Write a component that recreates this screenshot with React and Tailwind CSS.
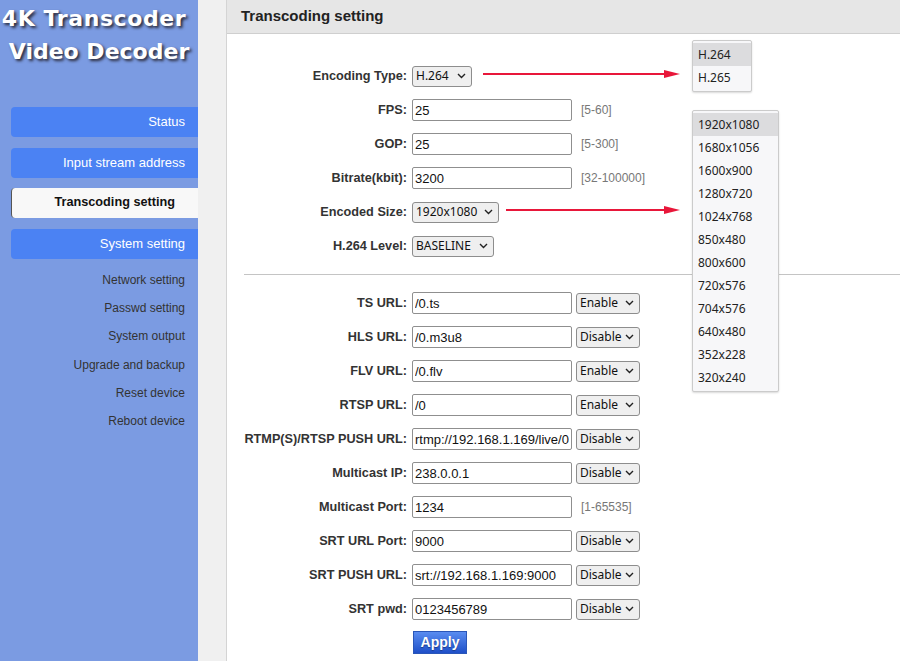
import React from "react";

const Chevron = () => (
  <svg width="9" height="6" viewBox="0 0 9 6" className="shrink-0">
    <path d="M1 1 L4.5 4.5 L8 1" fill="none" stroke="#222" strokeWidth="1.4" />
  </svg>
);

function Sel({ value, w }) {
  return (
    <div
      className={`h-[21px] ${w} border border-[#8d8d8d] rounded-[3px] bg-[#efefef] flex items-center justify-between pl-[3px] pr-[5px] text-[12px] text-[#111] font-['Noto_Sans',sans-serif] shrink-0`}
    >
      <span className="leading-none">{value}</span>
      <Chevron />
    </div>
  );
}

function Inp({ value }) {
  return (
    <input
      readOnly
      value={value}
      className="h-[22px] w-[160px] border border-[#8f8f8f] rounded-[2px] px-[2px] text-[13px] text-[#111] bg-white outline-none shrink-0 font-['Liberation_Sans',Arial,sans-serif]"
    />
  );
}

function Row({ label, children }) {
  return (
    <div className="flex items-center h-[34px]">
      <div className="w-[181px] shrink-0 text-right pr-[1px] pt-[1px] text-[12.7px] font-bold text-[#333]">{label}</div>
      <div className="ml-[4px] flex items-center">{children}</div>
    </div>
  );
}

const Hint = ({ t }) => <span className="ml-[9px] text-[12px] text-[#777]">{t}</span>;
const SSel = ({ v }) => (
  <div className="ml-[4px]">
    <Sel value={v} w="w-[64px]" />
  </div>
);

function Arrow({ className, width }) {
  return (
    <svg width={width} height="10" viewBox={`0 0 ${width} 10`} className={className}>
      <line x1="0" y1="5" x2={width - 14} y2="5" stroke="#e8173a" strokeWidth="2" />
      <polygon points={`${width - 16},1 ${width},5 ${width - 16},9`} fill="#e8173a" />
    </svg>
  );
}

const sizes = [
  "1920x1080",
  "1680x1056",
  "1600x900",
  "1280x720",
  "1024x768",
  "850x480",
  "800x600",
  "720x576",
  "704x576",
  "640x480",
  "352x228",
  "320x240",
];

export default function App() {
  const sub = ["Network setting", "Passwd setting", "System output", "Upgrade and backup", "Reset device", "Reboot device"];
  return (
    <div className="flex h-[661px] overflow-hidden font-['Liberation_Sans',Arial,sans-serif]">
      {/* Sidebar */}
      <div className="w-[198px] shrink-0 bg-[#7b9be2] flex flex-col">
        <div className="pt-[2px] text-center font-['DejaVu_Sans',Verdana,sans-serif] font-bold text-white text-[22px] leading-[33px] [text-shadow:2px_2px_3px_#2a2a3a] whitespace-nowrap">
          <div className="tracking-[0.6px] pr-[10px]">4K Transcoder</div>
          <div>Video Decoder</div>
        </div>
        <div className="mt-[39px] flex flex-col gap-[10.5px] pl-[11px]">
          <div className="h-[30px] bg-[#4b82f3] rounded-l-[4px] flex items-center justify-end pr-[13px] text-[13px] text-white">Status</div>
          <div className="h-[30px] bg-[#4b82f3] rounded-l-[4px] flex items-center justify-end pr-[13px] text-[13px] text-white">Input stream address</div>
          <div className="h-[30px] bg-[#f8f8f8] rounded-l-[4px] border-l border-[#555] flex items-center justify-end pr-[23px] text-[12.7px] font-bold text-[#111]">Transcoding setting</div>
          <div className="h-[30px] bg-[#4b82f3] rounded-l-[4px] flex items-center justify-end pr-[13px] text-[13px] text-white">System setting</div>
        </div>
        <div className="mt-[7.5px] flex flex-col">
          {sub.map((s) => (
            <div key={s} className="h-[28.2px] flex items-center justify-end pr-[13px] text-[12px] text-[#333]">
              {s}
            </div>
          ))}
        </div>
      </div>
      {/* Gap strip */}
      <div className="w-[29px] shrink-0 bg-[#f0f0f0] border-r border-[#d4d4d4]" />
      {/* Content */}
      <div className="flex-1 bg-white relative">
        <div className="h-[34px] bg-[#e6e6e6] border-b border-[#cfcfcf] pl-[14px] flex items-center text-[15px] font-bold text-[#222]">
          Transcoding setting
        </div>
        <div className="pt-[25px]">
          <Row label="Encoding Type:">
            <Sel value="H.264" w="w-[60px]" />
          </Row>
          <Row label="FPS:">
            <Inp value="25" />
            <Hint t="[5-60]" />
          </Row>
          <Row label="GOP:">
            <Inp value="25" />
            <Hint t="[5-300]" />
          </Row>
          <Row label="Bitrate(kbit):">
            <Inp value="3200" />
            <Hint t="[32-100000]" />
          </Row>
          <Row label="Encoded Size:">
            <Sel value="1920x1080" w="w-[87px]" />
          </Row>
          <Row label="H.264 Level:">
            <Sel value="BASELINE" w="w-[82px]" />
          </Row>
          <div className="mt-[11px] mb-[11px] ml-[17px] border-t border-[#c4c4c4]" />
          <Row label="TS URL:">
            <Inp value="/0.ts" />
            <SSel v="Enable" />
          </Row>
          <Row label="HLS URL:">
            <Inp value="/0.m3u8" />
            <SSel v="Disable" />
          </Row>
          <Row label="FLV URL:">
            <Inp value="/0.flv" />
            <SSel v="Enable" />
          </Row>
          <Row label="RTSP URL:">
            <Inp value="/0" />
            <SSel v="Enable" />
          </Row>
          <Row label="RTMP(S)/RTSP PUSH URL:">
            <Inp value="rtmp://192.168.1.169/live/0" />
            <SSel v="Disable" />
          </Row>
          <Row label="Multicast IP:">
            <Inp value="238.0.0.1" />
            <SSel v="Disable" />
          </Row>
          <Row label="Multicast Port:">
            <Inp value="1234" />
            <Hint t="[1-65535]" />
          </Row>
          <Row label="SRT URL Port:">
            <Inp value="9000" />
            <SSel v="Disable" />
          </Row>
          <Row label="SRT PUSH URL:">
            <Inp value="srt://192.168.1.169:9000" />
            <SSel v="Disable" />
          </Row>
          <Row label="SRT pwd:">
            <Inp value="0123456789" />
            <SSel v="Disable" />
          </Row>
          <div className="ml-[186px] mt-[5px] w-[54px] h-[23px] bg-gradient-to-b from-[#5a8cf0] to-[#1f4fc8] border border-[#2a56b8] flex items-center justify-center text-[14px] font-bold text-white [text-shadow:0_1px_1px_#1a3a8a]">
            Apply
          </div>
        </div>

        {/* Overlays: arrows */}
        <Arrow className="absolute left-[256px] top-[69px]" width={197} />
        <Arrow className="absolute left-[279px] top-[205px]" width={174} />

        {/* Dropdown lists */}
        <div className="absolute left-[465px] top-[40px] w-[60px] bg-[#f7f7f9] border border-[#cbcbcb] rounded-[2px] py-[2px] shadow-[0_1px_2px_rgba(0,0,0,0.15)] font-['Noto_Sans',sans-serif] text-[12px] text-[#222]">
          <div className="h-[23px] bg-[#dcdcde] flex items-center pl-[5px]">H.264</div>
          <div className="h-[23px] flex items-center pl-[5px]">H.265</div>
        </div>
        <div className="absolute left-[465px] top-[110px] w-[87px] bg-[#f7f7f9] border border-[#cbcbcb] rounded-[2px] py-[2px] shadow-[0_1px_2px_rgba(0,0,0,0.15)] font-['Noto_Sans',sans-serif] text-[12px] text-[#222]">
          {sizes.map((s, i) => (
            <div key={s} className={`h-[23px] flex items-center pl-[5px] ${i === 0 ? "bg-[#dcdcde]" : ""}`}>
              {s}
            </div>
          ))}
        </div>
      </div>
    </div>
  );
}
